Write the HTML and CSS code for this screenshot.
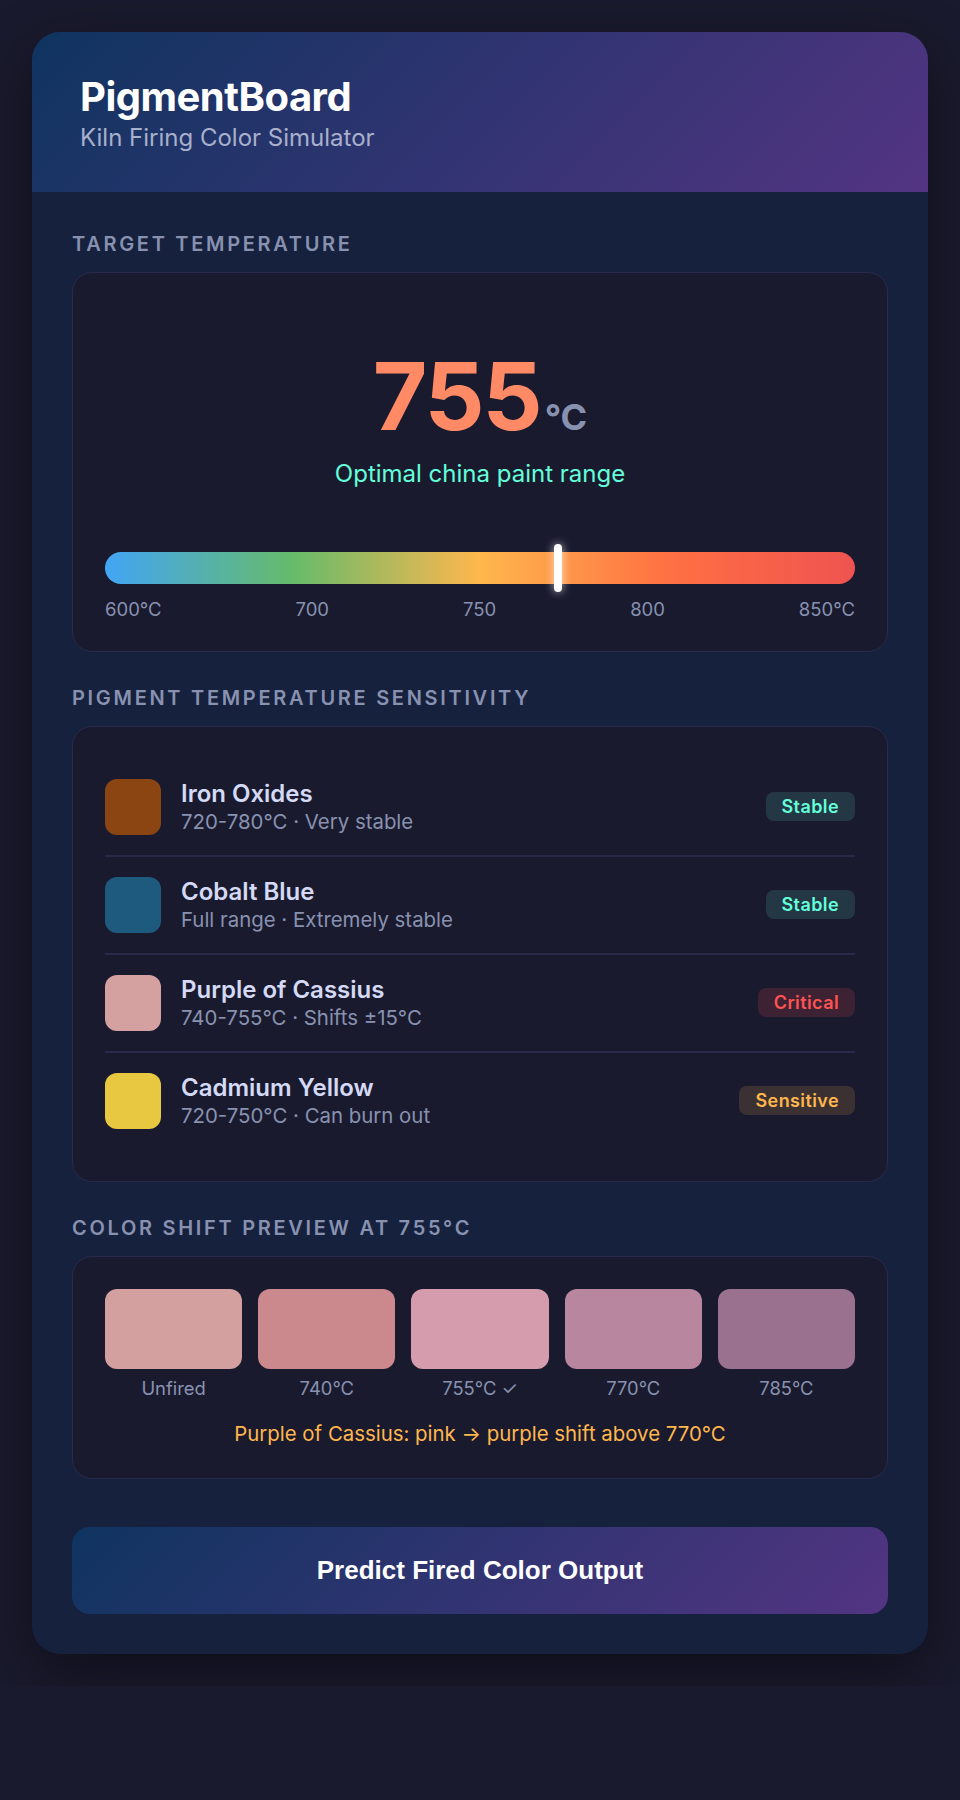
FILE: index.html
```html
<!DOCTYPE html>
<html lang="en">

<head>
  <meta charset="UTF-8">
  <title>PigmentBoard</title>
  <link rel="stylesheet" href="styles.css">
</head>

<body>
  <div class="app">
    <header class="header">
      <h1>PigmentBoard</h1>
      <p class="subtitle">Kiln Firing Color Simulator</p>
    </header>

    <main class="content">
      <section class="section">
        <h2 class="section-label">Target Temperature</h2>
        <div class="panel temp-panel">
          <div class="temp-readout">
            <span class="temp-value">755</span><span class="temp-unit">°C</span>
          </div>
          <div class="temp-status">Optimal china paint range</div>
          <div class="gauge">
            <div class="gauge-bar">
              <div class="gauge-marker" style="left: 60.4%"></div>
            </div>
            <div class="gauge-scale">
              <span>600°C</span>
              <span>700</span>
              <span>750</span>
              <span>800</span>
              <span>850°C</span>
            </div>
          </div>
        </div>
      </section>

      <section class="section">
        <h2 class="section-label">Pigment Temperature Sensitivity</h2>
        <div class="panel">
          <div class="pigment">
            <div class="pigment-swatch sw-iron"></div>
            <div class="pigment-info">
              <div class="pigment-name">Iron Oxides</div>
              <div class="pigment-detail">720-780°C · Very stable</div>
            </div>
            <span class="badge badge-stable">Stable</span>
          </div>
          <div class="pigment">
            <div class="pigment-swatch sw-cobalt"></div>
            <div class="pigment-info">
              <div class="pigment-name">Cobalt Blue</div>
              <div class="pigment-detail">Full range · Extremely stable</div>
            </div>
            <span class="badge badge-stable">Stable</span>
          </div>
          <div class="pigment">
            <div class="pigment-swatch sw-cassius"></div>
            <div class="pigment-info">
              <div class="pigment-name">Purple of Cassius</div>
              <div class="pigment-detail">740-755°C · Shifts ±15°C</div>
            </div>
            <span class="badge badge-critical">Critical</span>
          </div>
          <div class="pigment">
            <div class="pigment-swatch sw-cadmium"></div>
            <div class="pigment-info">
              <div class="pigment-name">Cadmium Yellow</div>
              <div class="pigment-detail">720-750°C · Can burn out</div>
            </div>
            <span class="badge badge-sensitive">Sensitive</span>
          </div>
        </div>
      </section>

      <section class="section">
        <h2 class="section-label">Color Shift Preview at 755°C</h2>
        <div class="panel">
          <div class="shift-grid">
            <div class="shift">
              <div class="shift-swatch shift-unfired"></div>
              <span>Unfired</span>
            </div>
            <div class="shift">
              <div class="shift-swatch shift-740"></div>
              <span>740°C</span>
            </div>
            <div class="shift">
              <div class="shift-swatch shift-755"></div>
              <span>755°C ✓</span>
            </div>
            <div class="shift">
              <div class="shift-swatch shift-770"></div>
              <span>770°C</span>
            </div>
            <div class="shift">
              <div class="shift-swatch shift-785"></div>
              <span>785°C</span>
            </div>
          </div>
          <p class="shift-note">Purple of Cassius: pink → purple shift above 770°C</p>
        </div>
      </section>

      <button class="predict-btn">Predict Fired Color Output</button>
    </main>
  </div>
</body>

</html>
```

FILE: styles.css
```css
body {
  background: #1a1a2e;
  color: #ccd6f6;
  font-family: 'Inter', 'Noto Sans', sans-serif;
  margin: 0;
  padding: 32px;
}

.app {
  background: #16213e;
  border-radius: 28px;
  overflow: hidden;
  box-shadow: 0 20px 60px rgba(0, 0, 0, 0.45);
}

.header {
  background: linear-gradient(135deg, #0f3460, #533483);
  padding: 40px 48px;
}

.header h1 {
  margin: 0;
  font-size: 40px;
  font-weight: 700;
  color: #fff;
  letter-spacing: -0.5px;
}

.subtitle {
  margin: 2px 0 0;
  font-size: 24px;
  color: #a8b0cc;
}

.content {
  padding: 40px;
}

.section + .section {
  margin-top: 34px;
}

.section-label {
  margin: 0 0 16px;
  font-size: 20px;
  font-weight: 600;
  text-transform: uppercase;
  letter-spacing: 2.7px;
  color: #8892b0;
}

.panel {
  background: #1a1a2e;
  border: 1px solid #2a2a4c;
  border-radius: 20px;
  padding: 32px;
}

/* temperature */
.temp-readout {
  text-align: center;
  margin-top: 44px;
  line-height: 1;
}

.temp-value {
  font-size: 94px;
  font-weight: 700;
  color: #ff8a65;
  letter-spacing: -2px;
}

.temp-unit {
  font-size: 36px;
  font-weight: 700;
  color: #8892b0;
  margin-left: 4px;
}

.temp-status {
  text-align: center;
  font-size: 24px;
  color: #64ffda;
  margin-top: 16px;
}

.gauge {
  margin-top: 64px;
}

.gauge-bar {
  position: relative;
  height: 32px;
  border-radius: 16px;
  background: linear-gradient(90deg, #42a5f5 0%, #66bb6a 25%, #ffb74d 50%, #ff7043 75%, #ef5350 100%);
}

.gauge-marker {
  position: absolute;
  top: -8px;
  width: 8px;
  height: 48px;
  margin-left: -4px;
  border-radius: 4px;
  background: #fff;
  box-shadow: 0 0 10px rgba(255, 255, 255, 0.7);
}

.gauge-scale {
  display: flex;
  justify-content: space-between;
  margin-top: 16px;
  font-size: 18.5px;
  line-height: 1;
  color: #8892b0;
}

/* pigments */
.pigment {
  display: flex;
  align-items: center;
  gap: 20px;
  padding: 20px 0;
  border-bottom: 2px solid #29294a;
}

.pigment:last-child {
  border-bottom: none;
}

.pigment-swatch {
  width: 56px;
  height: 56px;
  border-radius: 12px;
  flex-shrink: 0;
}

.sw-iron { background: #8b4513; }
.sw-cobalt { background: #1e5a7e; }
.sw-cassius { background: #d4a0a0; }
.sw-cadmium { background: #e8c840; }

.pigment-info {
  flex: 1;
}

.pigment-name {
  font-size: 24px;
  font-weight: 600;
  color: #d4daf6;
}

.pigment-detail {
  margin-top: 1px;
  font-size: 20.4px;
  color: #8892b0;
}

.badge {
  font-size: 18px;
  font-weight: 600;
  padding: 4px 16px;
  border-radius: 8px;
  letter-spacing: 0.4px;
}

.badge-stable {
  color: #64ffda;
  background: rgba(100, 255, 218, 0.13);
}

.badge-critical {
  color: #ff5252;
  background: rgba(255, 82, 82, 0.15);
}

.badge-sensitive {
  color: #ffb74d;
  background: rgba(255, 183, 77, 0.15);
}

/* color shift */
.shift-grid {
  display: grid;
  grid-template-columns: repeat(5, 1fr);
  gap: 16px;
}

.shift {
  display: flex;
  flex-direction: column;
  align-items: center;
  gap: 8px;
  font-size: 18.4px;
  color: #8892b0;
}

.shift-swatch {
  width: 100%;
  height: 80px;
  border-radius: 12px;
}

.shift-unfired { background: #d4a09f; }
.shift-740 { background: #cb898e; }
.shift-755 { background: #d49cac; }
.shift-770 { background: #b8869f; }
.shift-785 { background: #9a718e; }

.shift-note {
  margin: 22px 0 0;
  text-align: center;
  font-size: 20.4px;
  color: #ffb74d;
}

.predict-btn {
  display: block;
  width: 100%;
  margin-top: 48px;
  padding: 28px;
  border: none;
  border-radius: 18px;
  background: linear-gradient(135deg, #0f3460, #533483);
  color: #fff;
  font-family: 'Liberation Sans', Arial, sans-serif;
  font-size: 26px;
  font-weight: 700;
  cursor: pointer;
}
```
